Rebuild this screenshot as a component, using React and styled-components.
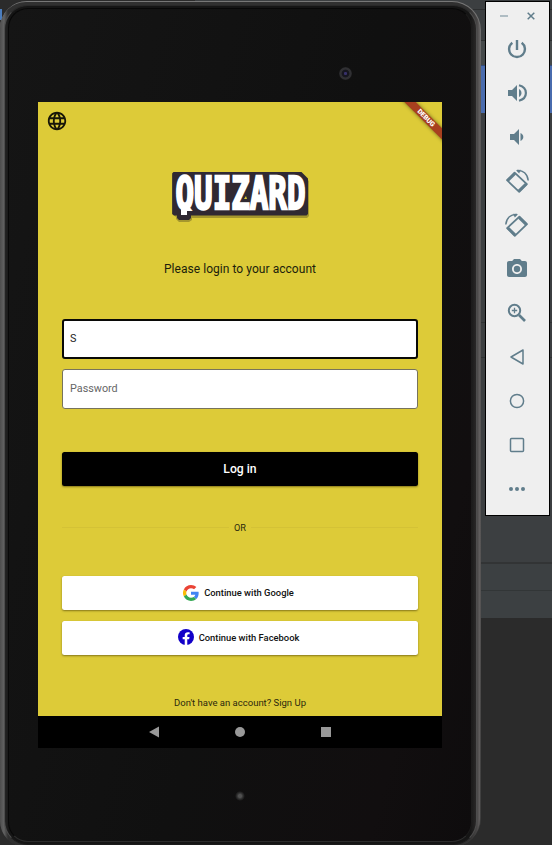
import React from "react";
import styled, { createGlobalStyle } from "styled-components";
import { MdPhotoCamera, MdLanguage } from "react-icons/md";

const GlobalStyle = createGlobalStyle`
  * { box-sizing: border-box; }
  body { margin: 0; background: #2b2b2b; font-family: Roboto, sans-serif; }
  svg { display: block; flex: none; }
`;

const Desktop = styled.div`
  display: flex;
  align-items: flex-start;
  width: 552px;
  height: 845px;
  overflow: hidden;
  background:
    linear-gradient(#4b7dbd, #4b7dbd) 0 9px / 2px 11px no-repeat,
    linear-gradient(#2b2b2b, #2b2b2b) 0 0 / 195px 60px no-repeat,
    linear-gradient(#2b2b2b, #2b2b2b) 0 700px / 60px 145px no-repeat,
    linear-gradient(
      #3c3f41 9px, #2d2f30 9px 10px, #3c3f41 10px 40px, #2d2f30 40px 41px,
      #45494a 41px 65px, #344c7c 65px 66px, #4a6cae 66px 113px, #3c3f41 113px 322px,
      #2f3233 322px 323px, #3c3f41 323px 357px, #2f3233 357px 358px, #3c3f41 358px 562px,
      #323435 562px 564px, #3c4042 564px 590px, #323637 590px 591px, #3c4042 591px 618px,
      #2b2b2b 618px
    );
`;

const Chassis = styled.div`
  width: 481px;
  height: 846px;
  margin-top: 1px;
  padding: 1px 1px 0 0;
  border-radius: 27px 29px 29px 27px;
  background: linear-gradient(#777, #5b5959 12%, #565454 70%, #3b3b3b);
`;

const Rim = styled.div`
  height: 845px;
  padding: 3px 3px 2px 4px;
  border-radius: 26px 28px 28px 26px;
  background: linear-gradient(90deg, #4d4d4d, #626262 4px, #303030 8px, #303030 470px, #474545 477px, #656262);
`;

const Groove = styled.div`
  height: 840px;
  padding: 2px 4px 2px 3px;
  border: 1px solid #4d4d4d;
  border-top-color: #292929;
  border-bottom-color: #1b1b1b;
  border-radius: 24px;
  background: linear-gradient(90deg, #252525, #151515 4px, #151515 465px, #292727);
`;

const Glass = styled.div`
  display: flex;
  flex-direction: column;
  height: 834px;
  padding-left: 29px;
  border-radius: 20px;
  border: 1px solid #080808;
  border-right-color: #1c1b1b;
  border-bottom-color: #2c2c2c;
  background: linear-gradient(105deg, #151515, #101010 55%, #110e0f 85%, #0e0c0d);
`;

const Forehead = styled.div`
  display: flex;
  align-items: center;
  height: 93px;
  padding: 35px 0 0 300.5px;
`;

const Lens = styled.div`
  width: 13px;
  height: 13px;
  border-radius: 50%;
  background: radial-gradient(circle, #37316a 0 1.2px, #16161f 2px 3.5px, #303033 4.3px 5.6px, #202022 6.5px);
`;

const Chin = styled.div`
  display: flex;
  justify-content: center;
  width: 404px;
  padding-top: 43px;
`;

const Led = styled.div`
  width: 10px;
  height: 10px;
  border-radius: 50%;
  background: radial-gradient(circle, #505050 0 1.5px, #303030 3px, transparent 5px);
`;

const Screen = styled.div`
  position: relative;
  width: 404px;
  height: 646px;
  flex: none;
  overflow: hidden;
  background: #000;
`;

const LoginPage = styled.main`
  display: flex;
  flex-direction: column;
  height: 614px;
  padding: 0 24px;
  background: #ddcb38;
`;

const TopBar = styled.div`
  display: flex;
  height: 68px;
  margin-left: -16px;
  padding-top: 8px;
  color: #171608;
`;

const Ribbon = styled.div`
  position: absolute;
  top: 12px;
  right: -24px;
  width: 80px;
  height: 8.2px;
  transform: rotate(45deg);
  background: #a8401f;
  box-shadow: 0 0 4px rgba(0, 0, 0, 0.5);
  color: #fff;
  font-size: 6.8px;
  font-weight: 900;
  line-height: 8.4px;
  text-align: center;
`;

const LogoSlot = styled.div`
  display: flex;
  justify-content: center;
  height: 54px;
`;

const Wordmark = styled.svg`
  overflow: visible;
`;

const Prompt = styled.p`
  margin: 36px 0 0;
  height: 18px;
  font-size: 12px;
  line-height: 18px;
  letter-spacing: 0.05px;
  text-align: center;
  color: #201e0c;
`;

const Field = styled.div`
  display: flex;
  align-items: center;
  width: 356px;
  height: 40px;
  margin-top: ${(p) => p.$gap}px;
  padding: 0 0 1px ${(p) => (p.$focused ? 6 : 7)}px;
  border: ${(p) => (p.$focused ? "2px solid #090907" : "1px solid #77735c")};
  border-radius: 3px;
  background: #fff;
  color: ${(p) => (p.$focused ? "#222" : "#666")};
  font-size: 10.8px;
`;

const Button = styled.button`
  display: flex;
  align-items: center;
  justify-content: center;
  gap: 5px;
  width: 356px;
  height: 34px;
  margin: ${(p) => p.$gap}px 0 0;
  padding: 0 ${(p) => (p.$dark ? 0 : 3)}px 1px 0;
  border: 0;
  border-radius: 2.5px;
  background: ${(p) => (p.$dark ? "#000" : "#fff")};
  color: ${(p) => (p.$dark ? "#fff" : "#111")};
  box-shadow: 0 1px 2px rgba(60, 50, 0, 0.55);
  font: 500 ${(p) => (p.$dark ? 12.2 : 9.4)}px Roboto, sans-serif;
`;

const Divider = styled.div`
  display: flex;
  align-items: center;
  gap: 5px;
  height: 14px;
  margin-top: 34.5px;
  font-size: 9.2px;
  color: #2c290d;
  &::before, &::after { content: ""; flex: 1; height: 1px; background: #d4c236; }
`;

const SignUp = styled.p`
  margin: 41px 0 0;
  font-size: 9.5px;
  line-height: 14px;
  text-align: center;
  color: #2c290d;
`;

const NavBar = styled.nav`
  display: flex;
  align-items: center;
  justify-content: center;
  gap: 76px;
  height: 32px;
  padding-right: 1px;
`;

const Controls = styled.aside`
  display: flex;
  flex-direction: column;
  width: 65px;
  height: 515px;
  margin: 1px 0 0 4px;
  border: 1px solid #000;
  background: #efefef;
  color: #607d8b;
`;

const WindowButtons = styled.div`
  display: flex;
  align-items: center;
  gap: 19px;
  height: 25px;
  padding: 3px 0 0 14px;
`;

const ControlButton = styled.div`
  display: flex;
  align-items: center;
  justify-content: center;
  height: 44px;
  padding-right: 1px;
`;

const Logo = () => (
  <Wordmark width="138" height="52" viewBox="0 0 138 52" aria-label="QUIZARD">
    <clipPath id="letterBand"><path d="M0 4H138V41H0Z" /></clipPath>
    <path d="M2 4H131L138 11V46L136 48H21V50L18 52H8L5 49V47L1 44V5Z" fill="#8d8029" opacity=".7" />
    <path d="M2.500 2H130.500L137 8.500V44L135.500 45.500H20V48L18 50H8L6 48V45.500H3L1.200 44V3.300Z" fill="#302932" />
    <g clipPath="url(#letterBand)">
      <text
        x="4.500" y="39" textLength="130" lengthAdjust="spacingAndGlyphs"
        fontFamily="DejaVu Sans Mono" fontWeight="700" fontSize="45"
        fill="#fff" stroke="#fff" strokeWidth="2.400" strokeLinejoin="miter"
      >
        QUIZARD
      </text>
    </g>
    <path d="M10 37h6v8h-6z" fill="#fff" />
    <path d="M73 29l2-3 1 3z" fill="#ddcb38" />
  </Wordmark>
);

const GoogleMark = () => (
  <svg width="16" height="16" viewBox="0 0 48 48">
    <path fill="#EA4335" d="M24 9.5c3.54 0 6.71 1.22 9.21 3.6l6.85-6.85C35.9 2.38 30.47 0 24 0 14.62 0 6.51 5.38 2.56 13.22l7.98 6.19C12.43 13.72 17.74 9.5 24 9.5z" />
    <path fill="#4285F4" d="M46.98 24.55c0-1.57-.15-3.09-.38-4.55H24v9.02h12.94c-.58 2.96-2.26 5.48-4.78 7.18l7.73 6c4.51-4.18 7.09-10.36 7.09-17.65z" />
    <path fill="#FBBC05" d="M10.53 28.59A14.5 14.5 0 0 1 10.53 19.41l-7.98-6.19a24 24 0 0 0 0 21.56l7.98-6.19z" />
    <path fill="#34A853" d="M24 48c6.48 0 11.93-2.13 15.89-5.81l-7.73-6c-2.15 1.45-4.92 2.3-8.16 2.3-6.26 0-11.57-4.22-13.47-9.91l-7.98 6.19C6.51 42.62 14.62 48 24 48z" />
  </svg>
);

const FacebookMark = () => (
  <svg width="16" height="16" viewBox="0 0 24 24">
    <circle cx="12" cy="12" r="12" fill="#1200c8" />
    <path fill="#fff" d="M10.1 24V15.5H7v-3.400h3.100V9.500c0-3.100 1.800-4.800 4.600-4.800 1.300 0 2.700.2 2.700.2v3h-1.500c-1.500 0-2 .9-2 1.900v2.300h3.400l-.6 3.400h-2.800V24z" />
  </svg>
);

const Rotate = ({ flip }) => (
  <svg width="24" height="24" viewBox="0 0 24 24" transform={flip ? "scale(-1 1)" : undefined}>
    <g fill="none" stroke="currentColor">
      <path d="M2 11.200L9.600 3.600L21.900 15.200L14.200 22.800Z" strokeWidth="1.800" strokeLinejoin="round" />
      <path d="M2.800 11.600L10 4.400M13.800 22L21 14.900" strokeWidth="2.800" />
      <path d="M12 1.500C18 .8 22.600 5 23.200 11.500" strokeWidth="1.500" />
    </g>
    <path d="M11 1.300l4.800-.6-1.600 3.800z" fill="currentColor" />
  </svg>
);

const Line = ({ children, weight = 1.5 }) => (
  <svg width="24" height="24" viewBox="0 0 24 24" fill="none" stroke="currentColor" strokeWidth={weight} strokeLinejoin="round">
    {children}
  </svg>
);

const controls = [
  <Line weight={2.4}><path d="M12 3v10M7.300 5.800A7.900 7.900 0 1 0 16.700 5.800" /></Line>,
  <Line weight={2.2}>
    <path d="M3 9v6h4l5 5V4L7 9z" fill="currentColor" stroke="none" />
    <path d="M14 8c3.300 1.600 3.300 6.400 0 8z" fill="currentColor" stroke="none" />
    <path d="M14 4.300c9.200 2.400 9.200 13 0 15.400" />
  </Line>,
  <Line>
    <path d="M5 9v6h4l5 5V4L9 9zM15.500 8c3.800 1.600 3.800 6.400 0 8z" fill="currentColor" stroke="none" />
  </Line>,
  <Rotate />,
  <Rotate flip />,
  <MdPhotoCamera size={24} />,
  <Line weight={2}>
    <circle cx="9.500" cy="9.500" r="5.700" />
    <path d="M14 14l6 6" strokeWidth="2.600" />
    <path d="M9.500 6.800v5.400M6.800 9.500h5.400" strokeWidth="1.300" />
  </Line>,
  <Line><path d="M18 5v14L6 12z" /></Line>,
  <Line><circle cx="12" cy="12" r="6.600" /></Line>,
  <Line><rect x="5.500" y="5.500" width="13" height="13" rx="1" /></Line>,
  <svg width="24" height="24" viewBox="0 0 24 24" fill="currentColor">
    <circle cx="6" cy="12" r="2" /><circle cx="12" cy="12" r="2" /><circle cx="18" cy="12" r="2" />
  </svg>,
];

export default function App() {
  return (
    <Desktop>
      <GlobalStyle />
      <Chassis>
        <Rim>
          <Groove>
            <Glass>
              <Forehead><Lens /></Forehead>
              <Screen>
                <LoginPage>
                  <TopBar><MdLanguage size={22} /></TopBar>
                  <LogoSlot><Logo /></LogoSlot>
                  <Prompt>Please login to your account</Prompt>
                  <Field $gap={41} $focused>S</Field>
                  <Field $gap={10}>Password</Field>
                  <Button $gap={43} $dark>Log in</Button>
                  <Divider>OR</Divider>
                  <Button $gap={41.5}><GoogleMark />Continue with Google</Button>
                  <Button $gap={10.5}><FacebookMark />Continue with Facebook</Button>
                  <SignUp>Don't have an account? Sign Up</SignUp>
                </LoginPage>
                <NavBar>
                  <svg width="10" height="12" viewBox="0 0 10 12"><path d="M10 .5v11L0 6z" fill="#999" /></svg>
                  <svg width="10" height="10" viewBox="0 0 10 10"><circle cx="5" cy="5" r="5" fill="#999" /></svg>
                  <svg width="10" height="10" viewBox="0 0 10 10"><rect width="10" height="10" fill="#999" /></svg>
                </NavBar>
                <Ribbon>DEBUG</Ribbon>
              </Screen>
              <Chin><Led /></Chin>
            </Glass>
          </Groove>
        </Rim>
      </Chassis>
      <Controls>
        <WindowButtons>
          <svg width="8" height="8" viewBox="0 0 8 8"><path d="M0 4h8" stroke="#9fb0b8" strokeWidth="1.600" /></svg>
          <svg width="8" height="8" viewBox="0 0 8 8"><path d="M.7.7l6.600 6.600M7.300.7L.7 7.300" stroke="currentColor" strokeWidth="1.500" /></svg>
        </WindowButtons>
        {controls.map((icon, i) => <ControlButton key={i}>{icon}</ControlButton>)}
      </Controls>
    </Desktop>
  );
}
